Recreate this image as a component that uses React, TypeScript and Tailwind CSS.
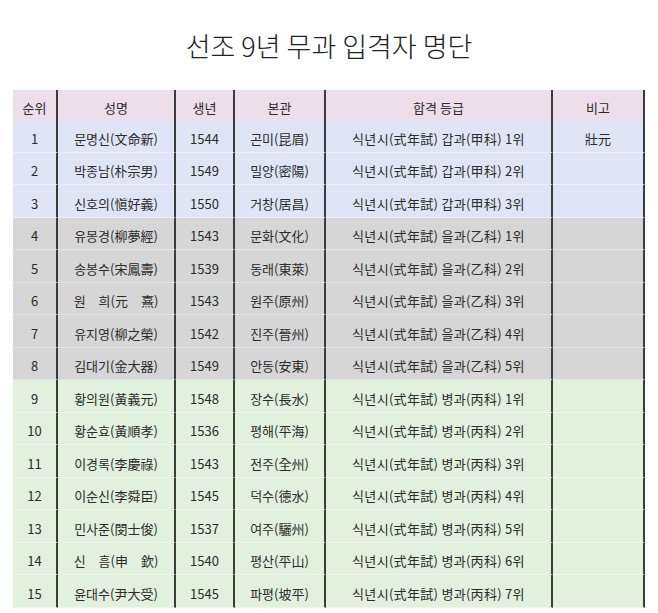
import React from "react";

type Row = {
  no: string;
  name: string;
  year: string;
  origin: string;
  grade: string;
  note: string;
  band: "blue" | "grey" | "green";
};

const rows: Row[] = [
  { no: "1", name: "문명신(文命新)", year: "1544", origin: "곤미(昆眉)", grade: "식년시(式年試) 갑과(甲科) 1위", note: "壯元", band: "blue" },
  { no: "2", name: "박종남(朴宗男)", year: "1549", origin: "밀양(密陽)", grade: "식년시(式年試) 갑과(甲科) 2위", note: "", band: "blue" },
  { no: "3", name: "신호의(愼好義)", year: "1550", origin: "거창(居昌)", grade: "식년시(式年試) 갑과(甲科) 3위", note: "", band: "blue" },
  { no: "4", name: "유몽경(柳夢經)", year: "1543", origin: "문화(文化)", grade: "식년시(式年試) 을과(乙科) 1위", note: "", band: "grey" },
  { no: "5", name: "송봉수(宋鳳壽)", year: "1539", origin: "동래(東萊)", grade: "식년시(式年試) 을과(乙科) 2위", note: "", band: "grey" },
  { no: "6", name: "원\u3000희(元\u3000熹)", year: "1543", origin: "원주(原州)", grade: "식년시(式年試) 을과(乙科) 3위", note: "", band: "grey" },
  { no: "7", name: "유지영(柳之榮)", year: "1542", origin: "진주(晉州)", grade: "식년시(式年試) 을과(乙科) 4위", note: "", band: "grey" },
  { no: "8", name: "김대기(金大器)", year: "1549", origin: "안동(安東)", grade: "식년시(式年試) 을과(乙科) 5위", note: "", band: "grey" },
  { no: "9", name: "황의원(黃義元)", year: "1548", origin: "장수(長水)", grade: "식년시(式年試) 병과(丙科) 1위", note: "", band: "green" },
  { no: "10", name: "황순효(黃順孝)", year: "1536", origin: "평해(平海)", grade: "식년시(式年試) 병과(丙科) 2위", note: "", band: "green" },
  { no: "11", name: "이경록(李慶祿)", year: "1543", origin: "전주(全州)", grade: "식년시(式年試) 병과(丙科) 3위", note: "", band: "green" },
  { no: "12", name: "이순신(李舜臣)", year: "1545", origin: "덕수(德水)", grade: "식년시(式年試) 병과(丙科) 4위", note: "", band: "green" },
  { no: "13", name: "민사준(閔士俊)", year: "1537", origin: "여주(驪州)", grade: "식년시(式年試) 병과(丙科) 5위", note: "", band: "green" },
  { no: "14", name: "신\u3000흠(申\u3000欽)", year: "1540", origin: "평산(平山)", grade: "식년시(式年試) 병과(丙科) 6위", note: "", band: "green" },
  { no: "15", name: "윤대수(尹大受)", year: "1545", origin: "파평(坡平)", grade: "식년시(式年試) 병과(丙科) 7위", note: "", band: "green" },
];

const bandClass: Record<Row["band"], string> = {
  blue: "bg-[#e0e5f5] border-b-[#eef1fa]",
  grey: "bg-[#d6d6d6] border-b-[#e2e2e2]",
  green: "bg-[#e2f1dd] border-b-[#eef6ea]",
};

const headers = ["순위", "성명", "생년", "본관", "합격 등급", "비고"];

export default function App() {
  return (
    <div className="w-[658px] h-[613px] overflow-hidden bg-white text-[#2b2b2b] font-['Noto_Sans_CJK_KR','Noto_Sans',sans-serif]">
      <div className="h-[90px] pt-[29px] text-center text-[27px] leading-[34px] font-light text-[#222]">
        선조 9년 무과 입격자 명단
      </div>
      <div className="ml-[13px] w-[632px] grid grid-cols-[45px_118px_59px_91px_227px_92px] text-[13px] leading-[16px]">
        {headers.map((h) => (
          <div
            key={h}
            className="h-[30px] pt-[5px] flex items-center justify-center bg-[#ecdfe9] border-r-2 border-r-[#3c3c3c]"
          >
            {h}
          </div>
        ))}
        {rows.map((r) =>
          [r.no, r.name, r.year, r.origin, r.grade, r.note].map((c, i) => (
            <div
              key={r.no + "-" + i}
              className={
                "h-[32.5px] pt-[6px] flex items-center justify-center whitespace-pre border-r-2 border-r-[#3c3c3c] border-b " +
                bandClass[r.band] +
                (i === 4 ? " tracking-[0.3px]" : "")
              }
            >
              {c}
            </div>
          ))
        )}
      </div>
    </div>
  );
}
